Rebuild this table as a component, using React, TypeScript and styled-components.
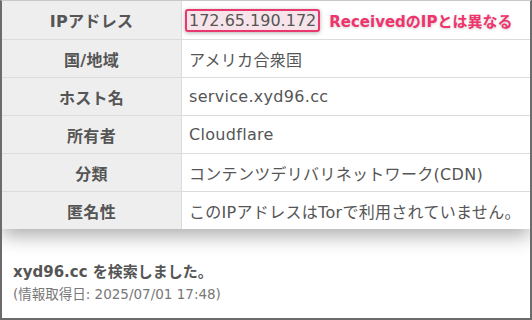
import React from "react";
import styled, { createGlobalStyle } from "styled-components";

const GlobalStyle = createGlobalStyle`
  html, body {
    margin: 0;
    padding: 0;
    background: #fff;
  }
  body {
    font-family: "DejaVu Sans", "Noto Sans CJK JP", sans-serif;
  }
`;

interface Row {
	label: string;
	value: React.ReactNode;
}

const rows: Row[] = [
	{ label: "国/地域", value: "アメリカ合衆国" },
	{ label: "ホスト名", value: "service.xyd96.cc" },
	{ label: "所有者", value: "Cloudflare" },
	{ label: "分類", value: "コンテンツデリバリネットワーク(CDN)" },
	{ label: "匿名性", value: "このIPアドレスはTorで利用されていません。" },
];

const App: React.FC = () => {
	return (
		<>
			<GlobalStyle />
			<Frame>
				<Table>
					<tbody>
						<tr>
							<Th>IPアドレス</Th>
							<Td>
								<IpCell>
									<IpBox>172.65.190.172</IpBox>
									<Note>ReceivedのIPとは異なる</Note>
								</IpCell>
							</Td>
						</tr>
						{rows.map((r) => (
							<tr key={r.label}>
								<Th>{r.label}</Th>
								<Td>{r.value}</Td>
							</tr>
						))}
					</tbody>
				</Table>
				<Footer>
					<Searched>xyd96.cc を検索しました。</Searched>
					<Fetched>(情報取得日: 2025/07/01 17:48)</Fetched>
				</Footer>
			</Frame>
		</>
	);
};

const Frame = styled.div`
  box-sizing: border-box;
  width: 532px;
  height: 320px;
  border: 2px solid #6b6b6b;
  border-top: 1px solid #c8c8c8;
  overflow: hidden;
  display: flex;
  flex-direction: column;
  background: #fff;
`;

const Table = styled.table`
  width: 100%;
  border-collapse: collapse;
  table-layout: fixed;
  box-shadow: 0 7px 18px rgba(0, 0, 0, 0.32);
  background: #fff;

  tr + tr > * {
    border-top: 1px solid #dcdcdc;
  }
  tr:first-child > * {
    height: 38px;
  }
`;

const Th = styled.th`
  width: 179px;
  height: 37px;
  padding: 0;
  background: #eeeeee;
  border-right: 1px solid #dcdcdc;
  color: #555;
  font-size: 16px;
  font-weight: 700;
  text-align: center;
  vertical-align: middle;
  letter-spacing: 0.3px;
`;

const Td = styled.td`
  padding: 0 0 0 7px;
  color: #555;
  font-size: 16px;
  font-weight: 400;
  text-align: left;
  vertical-align: middle;
  white-space: nowrap;
  letter-spacing: 0.3px;
`;

const IpCell = styled.div`
  display: flex;
  align-items: center;
  gap: 9px;
`;

const IpBox = styled.span`
  margin-left: -4px;
  padding: 0 2px;
  border: 2px solid #e8386d;
  border-radius: 3px;
  background: #f6e4ea;
  box-shadow: 0 1px 4px rgba(0, 0, 0, 0.3);
  color: #555;
  line-height: 19px;
  letter-spacing: 0;
`;

const Note = styled.span`
  color: #f0336c;
  font-size: 15px;
  font-weight: 700;
  letter-spacing: 0;
  text-shadow: 0 1px 3px rgba(0, 0, 0, 0.2);
`;

const Footer = styled.div`
  padding: 32px 11px 0;
  display: flex;
  flex-direction: column;
`;

const Searched = styled.div`
  color: #555;
  font-size: 15px;
  font-weight: 700;
  line-height: 22px;
`;

const Fetched = styled.div`
  color: #777;
  font-size: 13.5px;
  line-height: 22px;
`;

export default App;
